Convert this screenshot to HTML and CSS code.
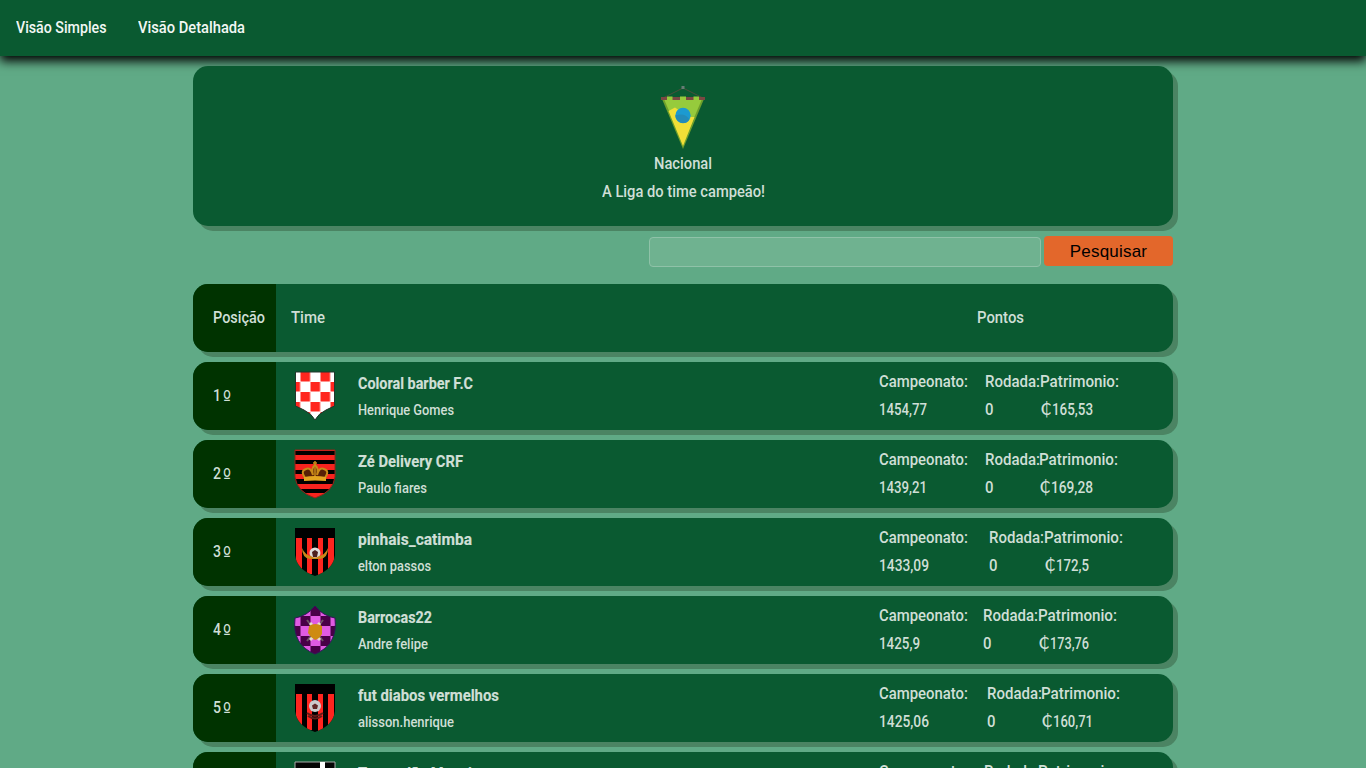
FILE: index.html
```html
<!DOCTYPE html>
<html lang="pt-BR">
<head>
<meta charset="utf-8">
<title>Nacional</title>
<link rel="stylesheet" href="styles.css">
</head>
<body>
<nav class="nav">
  <a><span class="t" data-w="90.5">Visão Simples</span></a>
  <a><span class="t" data-w="107">Visão Detalhada</span></a>
</nav>
<main class="page">
  <header class="card league">
    <svg width="46" height="64" viewBox="0 0 46 64">
      <path d="M3 12 23 2 43 12" fill="none" stroke="#4b4e3b" stroke-width="1"/>
      <rect x="21.5" y="0" width="3" height="3" fill="#667c74"/>
      <path d="M2 13H44L23 63Z" fill="#6f9f2b"/>
      <path d="M4 13H42L23 58Z" fill="#96cb3c"/>
      <path d="M8.500 25 15 21.500 20 25 28 31 34.500 31 23 60Z" fill="#f1df37"/>
      <path d="M1 11H45V14H1Z" fill="#7b4842"/>
      <path d="M7 10.500h5.500v4H7zM20 10.500h6v4h-6zM33.500 10.500H39v4h-5.500z" fill="#96cb3c"/>
      <circle cx="23" cy="29.500" r="7.700" fill="#1c9ad1"/>
      <path d="M15.400 29.500Q25 26.500 29.500 33.500A7.700 7.700 0 0 1 15.400 29.500" fill="#238bb9"/>
    </svg>
    <p><span class="t" data-w="58">Nacional</span></p>
    <p><span class="t" data-w="163">A Liga do time campeão!</span></p>
  </header>
  <form class="search"><input type="text" aria-label="Time"><button type="button">Pesquisar</button></form>
  <section class="card row head">
    <div class="pos"><span class="t" data-w="52">Posição</span></div>
    <div class="team"><span class="t" data-w="34">Time</span></div>
    <div class="points"><span class="t" data-w="47">Pontos</span></div>
  </section>
  <div id="rows"></div>
</main>
<svg width="0" height="0" class="defs">
  <defs>
    <clipPath id="shield"><path d="M1 1H41V28Q39 43 21 49Q3 43 1 28Z"/></clipPath>
    <clipPath id="point"><path d="M2 1H40V35L32 39Q24 43 21 49Q18 43 10 39L2 35Z"/></clipPath>
    <clipPath id="crest"><path d="M21 1Q29 11 41 13Q44 40 21 49Q-2 40 1 13Q13 11 21 1Z"/></clipPath>
    <pattern id="redcheck" x="6.500" y="1" width="20" height="20" patternUnits="userSpaceOnUse"><path fill="#fff" d="M0 0h20v20H0z"/><path fill="#ff261e" d="M0 0h9.600v9.600H0zM10 10h9.600v9.600H10z"/></pattern>
    <pattern id="pinkcheck" x="6.500" y="1" width="20" height="20" patternUnits="userSpaceOnUse"><path fill="#e05be2" d="M0 0h20v20H0z"/><path fill="#490047" d="M10 0h10v10H10zM0 10h10v10H0z"/></pattern>
  </defs>
</svg>
<script src="app.js"></script>
</body>
</html>
```
FILE: styles.css
```css
* { box-sizing: border-box; }
body { margin: 0; height: 768px; overflow: hidden; background: #60aa86; color: #cfdfd6; font: 500 16.5px/28px Roboto, sans-serif; }
p { margin: 0; }
.t { display: inline-block; white-space: nowrap; transform-origin: left center; }
.nav { position: relative; display: flex; gap: 31.5px; height: 56px; padding: 14px 16px 0; background: #0a5a31; color: #f2f7f4; box-shadow: 0 5px 10px #000; }
.page { width: 980px; margin: 10px auto 0; position: relative; }
.card { background: #0a5a31; border-radius: 15px; box-shadow: 5px 5px 0 #4b8463; }
.league { height: 160px; padding-top: 20px; text-align: center; }
.league svg { display: block; margin: 0 auto; }
.search { display: flex; justify-content: flex-end; align-items: flex-start; gap: 3px; margin: 10px 0 17px; height: 31px; }
.search input { width: 392px; height: 30px; margin-top: 1px; border: 1px solid #8fc2a8; border-radius: 4px; background: #6fb290; }
.search button { width: 129px; height: 30px; padding: 1px 0 0; border: 0; border-radius: 4px; background: #e3672b; color: #000; font: 17px "Liberation Sans", Arial, sans-serif; letter-spacing: .2px; }
.row { display: flex; height: 68px; margin-bottom: 10px; }
.pos { width: 83px; padding: 20px 0 0 20px; background: #030; border-radius: 15px 0 0 15px; }
.ordinal { margin-left: 2px; font: 21px/12px "DejaVu Sans", sans-serif; vertical-align: -5px; }
.head .team { width: 701px; padding: 20px 15px; }
.head .points { padding-top: 20px; }
.team { display: flex; width: 603px; padding: 8px 0 0 18px; }
.badge { width: 42px; height: 50px; flex: none; margin: 1px 22px 0 0; }
.names b { display: block; font-weight: 700; line-height: 28px; -webkit-text-stroke: .15px #cfdfd6; }
.names small { display: block; font-size: 14px; line-height: 24px; }
.stats { display: flex; padding-top: 6px; }
.champ { width: var(--first); }
.round { width: 54.500px; }
.cedi { font-family: "DejaVu Sans", sans-serif; font-weight: 400; font-size: 17px; line-height: 20px; }
.defs { position: absolute; }
```
FILE: app.js
```js
const stripes = '<path d="M0 0H42V50H0" fill="#000"/><path d="M2 11h6v34H2zM13 11h5v36h-5zM24 11h5v37h-5zM34 11h6v34h-6z" fill="#ff251f"/>';
const badges = [
  '<g clip-path="url(#point)"><path d="M0 0H42V50H0" fill="url(#redcheck)"/></g><path d="M1.500 1H40.500V35L32 39Q24 43 21 49Q18 43 10 39L1.500 35Z" fill="none" stroke="#24352c"/>',
  '<g clip-path="url(#shield)"><path d="M0 0H42V50H0" fill="#f7231e"/><path d="M0 2h42v4H0zM0 11h42v4H0zM0 21h42v4H0zM0 30h42v5H0zM0 40h42v4H0z" fill="#000"/></g><path d="M1 1H41V28Q39 43 21 49Q3 43 1 28Z" fill="none" stroke="#8f251a"/><path d="M11 29Q6 22 12 20Q17 18 19 26Q17 19 21 16Q25 19 23 26Q25 18 30 20Q36 22 31 29Z" fill="#572006" stroke="#c98a18" stroke-width="2"/><path d="M21 12v16M19 14h4" stroke="#c98a18" stroke-width="1.500"/><path d="M10 28Q21 26 32 28V32Q21 31 10 32Z" fill="#e3a520"/>',
  '<g clip-path="url(#shield)">' + stripes + '</g><circle cx="21" cy="26" r="5.500" fill="#ddd"/><path d="m21 23 3 2-1 5h-4l-1-5z" fill="#4b2020"/><path d="M8 21Q11 28 17 29Q21 32 25 29Q31 28 34 21Q34 31 26 32H16Q8 31 8 21Z" fill="#cc8618"/>',
  '<g clip-path="url(#crest)"><path d="M0 0H42V50H0" fill="url(#pinkcheck)"/></g><path d="M21 1Q29 11 41 13Q44 40 21 49Q-2 40 1 13Q13 11 21 1Z" fill="none" stroke="#36105c"/><path d="M13 15 29 36M29 15 13 36" stroke="#6d5365" stroke-width="2"/><path d="m16 35 3-3M26 35l-3-3M16 18l2 2M26 18l-2 2" stroke="#e5dccd" stroke-width="3"/><path d="M15 21Q21 17 28 21V29Q25 34 21 35Q17 33 14 28Z" fill="#ce8b12"/>',
  '<g clip-path="url(#shield)">' + stripes + '</g><path d="M13 30Q21 36 29 30M14 33Q21 38 28 33" fill="none" stroke="#641c18" stroke-width="2"/><circle cx="21" cy="23" r="6" fill="#ccc"/><path d="m21 20.500 3 2-1 3.500h-4l-1-3.500z" fill="#622724"/>',
  '<path d="M1 1H41V40H1Z" fill="#050505" stroke="#aaa"/><path d="M26 1h5v30h-5z" fill="#fff"/>'
];
const teams = [
  ['Coloral barber F.C', 115, 'Henrique Gomes', 96, '1454,77', 48, '165,53', 41, 106],
  ['Zé Delivery CRF', 105, 'Paulo fiares', 69, '1439,21', 48, '169,28', 42, 105.5],
  ['pinhais_catimba', 114, 'elton passos', 73, '1433,09', 50, '172,5', 33, 110],
  ['Barrocas22', 74, 'Andre felipe', 70, '1425,9', 41, '173,76', 39, 104],
  ['fut diabos vermelhos', 141, 'alisson.henrique', 96, '1425,06', 50, '160,71', 40, 107.5],
  ['Tamandão Mengi', 114, 'Tamandão', 60, '1424,02', 49, '161,20', 40, 104.5]
];
const t = (text, width) => `<span class="t" data-w="${width}">${text}</span>`;
document.getElementById('rows').innerHTML = teams.map((d, i) => `
<section class="card row">
  <div class="pos">${t(i + 1, 8)}<span class="t ordinal" data-w="8">º</span></div>
  <div class="team"><svg class="badge" viewBox="0 0 42 50">${badges[i]}</svg>
    <div class="names"><b>${t(d[0], d[1])}</b><small>${t(d[2], d[3])}</small></div></div>
  <div class="stats">
    <div class="champ" style="--first:${d[8]}px">${t('Campeonato:', 89)}<br>${t(d[4], d[5])}</div>
    <div class="round">${t('Rodada:', 55)}<br>${t('0', 8.5)}</div>
    <div>${t('Patrimonio:', 79)}<br><span class="t cedi" data-w="12">₵</span>${t(d[6], d[7])}</div>
  </div>
</section>`).join('');

document.querySelectorAll('.t').forEach(el => {
  const natural = el.getBoundingClientRect().width;
  const wanted = Number(el.dataset.w);
  el.style.transform = `scaleX(${wanted / natural})`;
  el.style.marginRight = `${wanted - natural}px`;
});
```
